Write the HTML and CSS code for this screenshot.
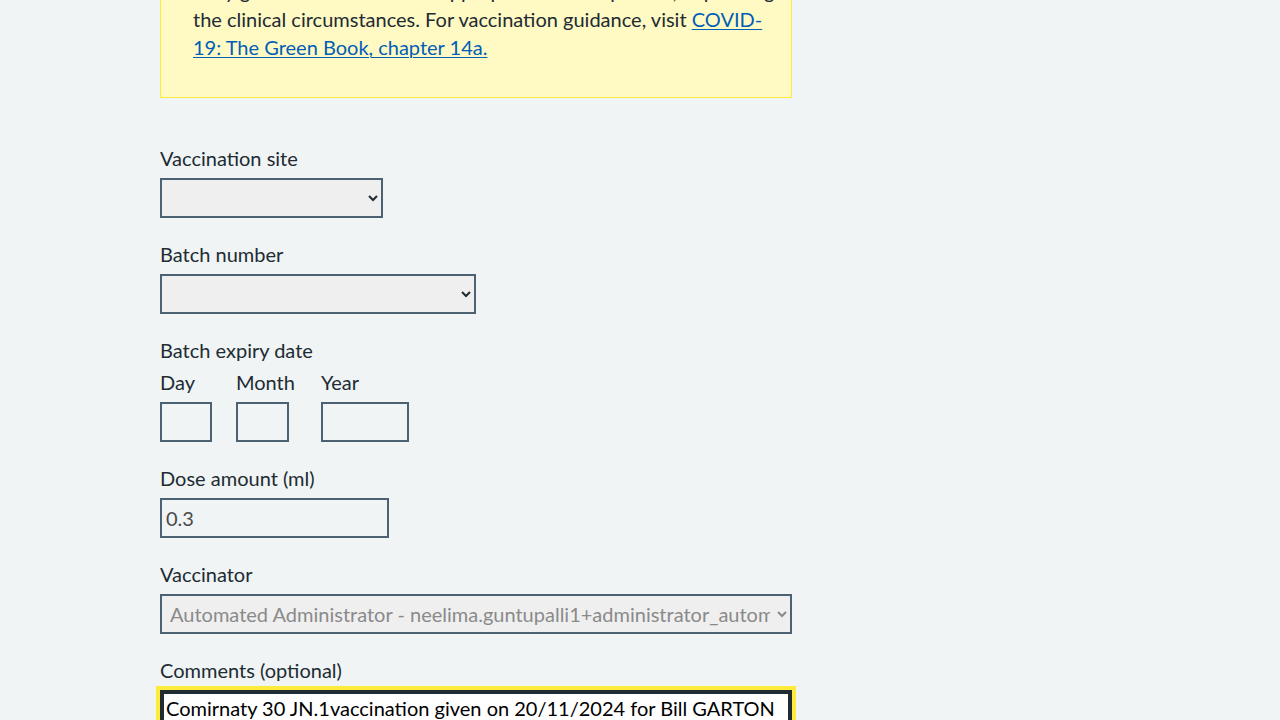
FILE: index.html
```html
<!DOCTYPE html>
<html lang="en">
<head>
<meta charset="utf-8">
<title>Record vaccination</title>
<link rel="stylesheet" href="styles.css">
</head>
<body>
<main class="page">
  <div class="column">
    <div class="callout">
      <p>Only give this vaccine if it is appropriate for the patient, depending on<br>the clinical circumstances. For vaccination guidance, visit <a href="#" class="link">COVID-<br>19: The Green Book, chapter 14a.</a></p>
    </div>

    <div class="group">
      <label class="label" for="site">Vaccination site</label>
      <select id="site" class="select select-site"><option></option></select>
    </div>

    <div class="group">
      <label class="label" for="batch">Batch number</label>
      <select id="batch" class="select select-batch"><option></option></select>
    </div>

    <div class="group">
      <div class="label legend">Batch expiry date</div>
      <div class="date">
        <div class="date-item">
          <label class="label" for="day">Day</label>
          <input id="day" class="input w-day" type="text">
        </div>
        <div class="date-item month-item">
          <label class="label" for="month">Month</label>
          <input id="month" class="input w-month" type="text">
        </div>
        <div class="date-item">
          <label class="label" for="year">Year</label>
          <input id="year" class="input w-year" type="text">
        </div>
      </div>
    </div>

    <div class="group">
      <label class="label" for="dose">Dose amount (ml)</label>
      <input id="dose" class="input w-dose" type="text" value="0.3">
    </div>

    <div class="group">
      <label class="label" for="vaccinator">Vaccinator</label>
      <select id="vaccinator" class="select select-full" disabled><option>Automated Administrator - neelima.guntupalli1+administrator_automated@nhs.net</option></select>
    </div>

    <div class="group">
      <label class="label" for="comments">Comments (optional)</label>
      <textarea id="comments" class="textarea" rows="4">Comirnaty 30 JN.1vaccination given on 20/11/2024 for Bill GARTON</textarea>
    </div>
  </div>
</main>
</body>
</html>
```

FILE: styles.css
```css
html, body {
  margin: 0;
  padding: 0;
  background: #f0f4f5;
  height: 720px;
  overflow: hidden;
}

body {
  font-family: Lato, "Noto Sans", Arial, sans-serif;
  color: #212b32;
  font-size: 20px;
  line-height: 28px;
}

.page {
  width: 960px;
  margin: 0 auto;
}

.column {
  width: 632px;
}

.callout {
  margin-top: -56px;
  background: #fff9c4;
  border: 1px solid #ffeb3b;
  padding: 32px 20px 36px 32px;
  margin-bottom: 48px;
}

.callout p {
  margin: 0;
  white-space: nowrap;
}

.link {
  color: #005eb8;
  text-decoration: underline;
  text-decoration-thickness: 1px;
  text-underline-offset: 2px;
}

.group {
  margin-bottom: 24px;
}

.label {
  display: block;
  line-height: 24px;
  margin-bottom: 8px;
}

.select {
  display: block;
  box-sizing: border-box;
  height: 40px;
  border: 2px solid #4c6272;
  border-radius: 0;
  background-color: #efefef;
  font-family: inherit;
  font-size: 20px;
  color: #212b32;
  padding: 0 4px 0 4px;
}

.select-site { width: 223px; }
.select-batch { width: 316px; }
.select-full { width: 632px; }

.select:disabled {
  color: #8a8a8a;
  opacity: 1;
}

.date {
  display: flex;
}

.date-item {
  margin-right: 24px;
}

.month-item {
  min-width: 61px;
}

.input {
  display: block;
  box-sizing: border-box;
  height: 40px;
  border: 2px solid #4c6272;
  border-radius: 0;
  background: transparent;
  font-family: inherit;
  font-size: 20px;
  color: #4b4b4b;
  padding: 4px;
}

.w-day { width: 52px; }
.w-month { width: 53px; }
.w-year { width: 88px; }
.w-dose { width: 229px; }

.textarea {
  display: block;
  box-sizing: border-box;
  width: 632px;
  height: 120px;
  border: 2px solid #212b32;
  box-shadow: inset 0 0 0 2px #212b32;
  outline: 4px solid #ffeb3b;
  border-radius: 0;
  background: #ffffff;
  font-family: inherit;
  font-size: 20px;
  line-height: 28px;
  color: #000000;
  padding: 2px 4px 4px 4px;
  resize: none;
}
```
